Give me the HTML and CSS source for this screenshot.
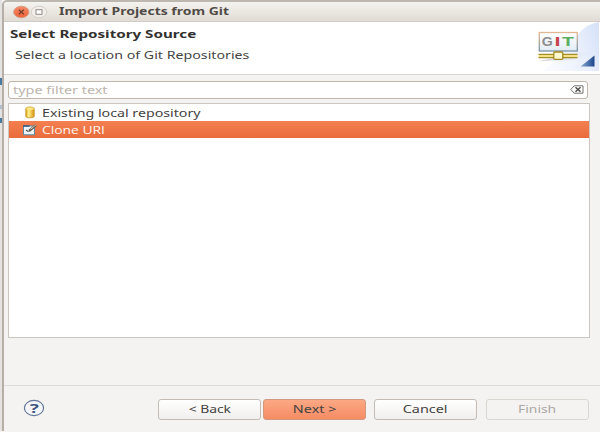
FILE: index.html
```html
<!DOCTYPE html>
<html lang="en">
<head>
<meta charset="utf-8">
<title>Import Projects from Git</title>
<link rel="stylesheet" href="styles.css">
</head>
<body>
<div class="desktop">
<div class="edge"><i></i><i></i><i></i></div>
<main class="window">
  <header class="titlebar">
    <svg class="controls" width="42" height="16" viewBox="0 0 42 16">
      <defs><linearGradient id="close" x2="0" y2="1"><stop stop-color="#f48a69"/><stop offset="1" stop-color="#ee6036"/></linearGradient></defs>
      <ellipse cx="11.3" cy="8" rx="7.7" ry="5.8" fill="url(#close)" stroke="#d3a18c"/>
      <path d="M8.8 5.8l5 4.4m0-4.4l-5 4.4" stroke="#713b28" stroke-width="1.2"/>
      <ellipse cx="29" cy="8" rx="7.7" ry="5.8" fill="#f2efeb" stroke="#d5cfc8"/>
      <rect x="26" y="5.7" width="6" height="4.6" fill="#fff" stroke="#8e8983"/>
    </svg>
    <h1><span class="t title">Import Projects from Git</span></h1>
  </header>
  <section class="banner">
    <div class="intro">
      <h2><span class="t heading">Select Repository Source</span></h2>
      <p><span class="t subtitle">Select a location of Git Repositories</span></p>
    </div>
    <svg class="art" width="80" height="52" viewBox="0 0 80 52">
      <defs>
        <linearGradient id="sky" x1="0" y1=".3" x2="1" y2="0"><stop stop-color="#f8faff"/><stop offset=".55" stop-color="#e9effc"/><stop offset="1" stop-color="#d5e1f8"/></linearGradient>
        <linearGradient id="card" x2="0" y2="1"><stop stop-color="#fff"/><stop offset="1" stop-color="#e2ecf4"/></linearGradient>
        <linearGradient id="rim" x2="0" y2="1"><stop stop-color="#e2b893"/><stop offset="1" stop-color="#7893a5"/></linearGradient>
        <linearGradient id="fold" x2="1"><stop stop-color="#88add7"/><stop offset="1" stop-color="#1c4589"/></linearGradient>
        <linearGradient id="shade" x2="1"><stop stop-color="#c9c6d2"/><stop offset="1" stop-color="#e6e9f5" stop-opacity="0"/></linearGradient>
      </defs>
      <path d="M80 0C68 2 59 9 55 21L24 49H80Z" fill="url(#sky)"/>
      <path d="M20 39L58 31 78 29 54 38Z" fill="url(#shade)"/>
      <path d="M61.5 44.5L75.5 33.5V44.5Z" fill="url(#fold)"/>
      <rect x="20.3" y="10.5" width="38" height="18.5" fill="url(#card)" stroke="url(#rim)" stroke-width="1.3"/>
      <g class="git"><text x="22.7" y="24" textLength="11" lengthAdjust="spacingAndGlyphs" fill="#8b8d8e">G</text><text x="35.5" y="24" textLength="6" lengthAdjust="spacingAndGlyphs" fill="#c9424c">I</text><text x="43" y="24" textLength="12" lengthAdjust="spacingAndGlyphs" fill="#5cae60">T</text></g>
      <path d="M19.5 32.3H58.5M19.5 35.7H58.5" stroke="#a48e28" stroke-width="1.2"/><path d="M19.5 34H58.5" stroke="#f5e184" stroke-width="2"/>
      <rect x="34.8" y="30" width="9" height="7.3" rx="1" fill="#fff9cf" stroke="#a58b20" stroke-width="1.3"/>
    </svg>
  </section>
  <section class="content">
    <div class="filter"><span class="t hint">type filter text</span>
      <svg width="14" height="9" viewBox="0 0 14 9"><path d="M.8 4.5L4.2.8H13V8.2H4.2Z" fill="#fff" stroke="#77736f"/><path d="M5.5 2.3l5 4.4m0-4.4l-5 4.4" stroke="#4e4b48" stroke-width="1.5"/></svg>
    </div>
    <ul class="list">
      <li><svg width="16" height="14" viewBox="0 0 16 14"><defs><linearGradient id="gold"><stop stop-color="#dda21f"/><stop offset=".35" stop-color="#fff08a"/><stop offset="1" stop-color="#d8930e"/></linearGradient></defs><path d="M3.8 2.7C4 .5 12 .5 12.2 2.7V10.3C12 12.3 4 12.3 3.8 10.3Z" fill="url(#gold)" stroke="#c78e1c" stroke-width=".8"/><ellipse cx="8" cy="2.7" rx="3.8" ry="1.2" fill="#ffe987"/></svg><span class="t local">Existing local repository</span></li>
      <li class="selected"><svg width="16" height="14" viewBox="0 0 16 14"><path d="M1.5 3H12.5V11.8H1.5Z" fill="#eef4f8" stroke="#5b87a6"/><path d="M1 3H7.5" stroke="#345d84" stroke-width="1.6"/><path d="M7 8L14 2.2" stroke="#5e574c" stroke-width="2.4"/><path d="M8.5 6.3L14 1.8" stroke="#d9ccb2" stroke-width="1"/><path d="M4 7l2.5 1.8" stroke="#555" stroke-width="1.2"/></svg><span class="t clone">Clone URI</span></li>
    </ul>
  </section>
  <footer class="actions">
    <svg class="help" width="22" height="18" viewBox="0 0 22 18"><ellipse cx="11" cy="9" rx="9.6" ry="7.6" fill="#f3f5f8" stroke="#64789a" stroke-width="1.2"/><text x="6.7" y="13.5" textLength="9" lengthAdjust="spacingAndGlyphs">?</text></svg>
    <div class="buttons">
      <button><span class="t">&lt; Back</span></button>
      <button class="primary"><span class="t next">Next &gt;</span></button>
      <button class="cancel"><span class="t next">Cancel</span></button>
      <button class="finish" disabled><span class="t">Finish</span></button>
    </div>
  </footer>
</main>
</div>
</body>
</html>
```
FILE: styles.css
```css
* { box-sizing: border-box; }
body { margin: 0; width: 600px; height: 432px; overflow: hidden; background: #f5f4f2; font: 11px/16px "Noto Sans", sans-serif; color: #454341; }
h1, h2, p, ul { margin: 0; padding: 0; font-size: 11px; }
p { font-weight: 400; }
svg { display: block; flex: none; }
.desktop { display: flex; height: 431px; }
.edge { width: 2px; flex: none; background: #e4e3e1; padding-top: 78px; }
.edge i { display: block; height: 7px; margin-bottom: 20px; background: #477a9e; }
.edge i + i { height: 4px; margin-bottom: 9px; background: #b4bdcb; }
.edge i + i + i { height: 5px; background: #477a9e; }
.window { flex: 1; min-width: 0; display: flex; flex-direction: column; background: #f4f3f1; border-left: 2px solid #b6afa8; border-top: 2px solid #bcb8b0; border-top-left-radius: 5px; }
.t { display: inline-block; white-space: nowrap; transform-origin: left center; transform: scaleX(1.26); }
.title { transform: scaleX(1.27); }
.heading { transform: scaleX(1.38); }
.subtitle { transform: scaleX(1.235); }
.hint { transform: scaleX(1.31); }
.local { transform: scaleX(1.292); }
.clone { font-family: "Open Sans", sans-serif; transform: scaleX(1.26); }
.titlebar { height: 20px; flex: none; display: flex; background: linear-gradient(#f5f3ef, #e0dbd4); border-bottom: 1px solid #d2cdc6; border-top-left-radius: 4px; }
.controls { margin: 2px 0 0 6px; }
.titlebar h1 { margin: 1px 0 0 7px; color: #504b46; }
.banner { height: 52px; flex: none; display: flex; justify-content: space-between; background: #fff; color: #33312f; overflow: hidden; }
.intro h2 { margin: 4px 0 0 6px; }
.intro p { margin: 5px 0 0 11px; font-size: 11.5px; color: #444; }
.art { margin-right: 1px; }
.git text { font: bold 13px "Liberation Sans", sans-serif; }
.content { height: 312px; flex: none; padding: 6px 10px 0 4px; border-top: 1px solid #dad7d2; border-bottom: 1px solid #dfdcd8; }
.filter { height: 18px; width: 580px; padding: 0 3px 1px 4px; display: flex; align-items: center; justify-content: space-between; background: #fff; border: 1px solid #bfb6ac; border-radius: 3px; color: #bdb5ac; }
.list { list-style: none; height: 235px; width: 582px; margin-top: 4px; background: #fff; border: 1px solid #cac5be; }
.list li { display: flex; align-items: center; gap: 4px; height: 17px; padding-left: 13px; }
.list .selected { background: linear-gradient(#f47f50, #e96c3c); color: #fff4ed; }
.actions { display: flex; flex: 1; }
.help { margin: 13px 0 0 19px; }
.help text { font: bold 13px "Noto Sans", sans-serif; fill: #40577e; }
.buttons { display: flex; margin: 13px 0 0 113px; }
button { width: 103px; height: 21px; padding: 0 0 1px; border: 1px solid #c2bcb4; border-radius: 3px; background: linear-gradient(#fff, #f1efed); color: #454341; font: inherit; line-height: 16px; }
button .t { transform-origin: center; }
.primary { margin-left: 2px; background: linear-gradient(#fca884, #f68c64); border-color: #cf987f; }
.next { transform: scaleX(1.31); }
.cancel { margin-left: 8px; }
.finish { margin-left: 9px; background: #f5f3f1; border-color: #dad6d1; color: #aaa8a6; }
```
